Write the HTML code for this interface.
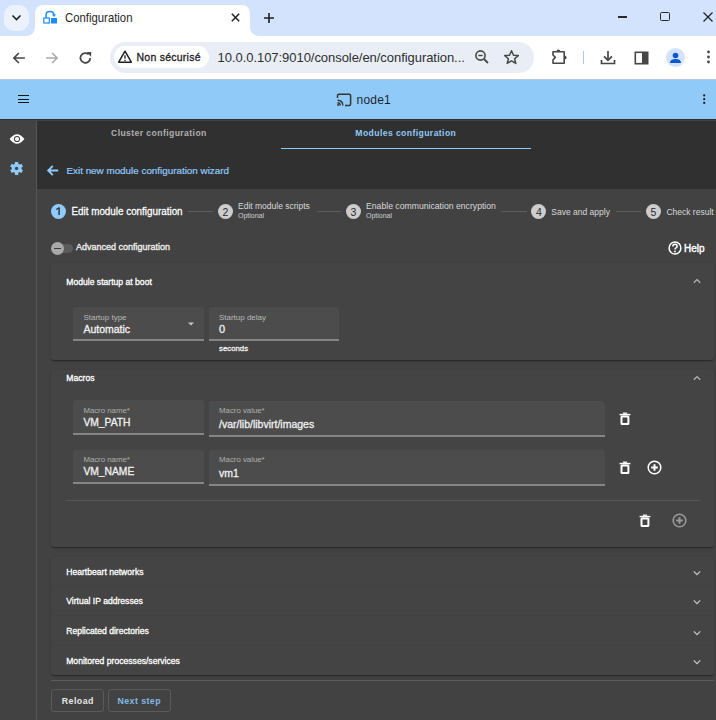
<!DOCTYPE html>
<html><head><meta charset="utf-8"><style>
html,body{margin:0;padding:0;}
body{width:716px;height:720px;position:relative;overflow:hidden;background:#424242;font-family:"Liberation Sans",sans-serif;}
.t{position:absolute;white-space:nowrap;}
.r{position:absolute;display:block;}
</style></head><body>
<div class="r" style="left:0px;top:0px;width:716px;height:36px;background:#d3e3fd;"></div>
<div class="r" style="left:4px;top:5px;width:25px;height:25.5px;background:#ecf2fc;border-radius:10px;"></div>
<svg class="r" style="left:4px;top:5px;" width="25" height="25" viewBox="0 0 25 25"><path d="M8.5 10.5 L12.5 14.5 L16.5 10.5" fill="none" stroke="#1f1f1f" stroke-width="1.6"/></svg>
<svg class="r" style="left:25px;top:5px;" width="235" height="31" viewBox="0 0 235 31"><path d="M0 31 Q10 31 10 21 L10 9 Q10 0 19 0 L216 0 Q225 0 225 9 L225 21 Q225 31 235 31 Z" fill="#fff"/></svg>
<svg class="r" style="left:0px;top:36px;" width="5" height="3" viewBox="0 0 5 3"><path d="M0 0 H4 Q0 0 0 3 Z" fill="#d3e3fd"/></svg>
<svg class="r" style="left:43px;top:10px;" width="15" height="14" viewBox="0 0 15 14"><path d="M3 8 L3 5 Q3 1.5 7 1.5 Q10.5 1.5 11 5" fill="none" stroke="#1a8cff" stroke-width="1.5"/><path d="M9 4.5 L11 7 L13 4.5Z" fill="#1a8cff"/><rect x="0.8" y="8" width="5.5" height="5" fill="none" stroke="#1a8cff" stroke-width="1.2"/><rect x="8" y="8" width="6" height="5.5" fill="#1a8cff"/></svg>
<div class="t" style="left:65px;top:12.89px;font-size:11.35px;line-height:11.35px;color:#262626;font-weight:normal;transform:scaleY(1.08);transform-origin:0 9.61px;">Configuration</div>
<svg class="r" style="left:230px;top:12px;" width="11" height="11" viewBox="0 0 11 11"><path d="M1.8 1.8 L9.2 9.2 M9.2 1.8 L1.8 9.2" stroke="#1f1f1f" stroke-width="1.5"/></svg>
<svg class="r" style="left:263px;top:12px;" width="12" height="12" viewBox="0 0 12 12"><path d="M6 1 V11 M1 6 H11" stroke="#1f1f1f" stroke-width="1.6"/></svg>
<div class="r" style="left:617.8px;top:16.2px;width:9.6px;height:1.5px;background:#2a2a2a;"></div>
<div class="r" style="left:659.8px;top:11.8px;width:10.2px;height:9.4px;background:transparent;border:1.5px solid #2a2a2a;border-radius:1.5px;box-sizing:border-box;"></div>
<svg class="r" style="left:702px;top:11px;" width="12" height="12" viewBox="0 0 12 12"><path d="M1.5 1.5 L10.5 10.5 M10.5 1.5 L1.5 10.5" stroke="#1f1f1f" stroke-width="1.2"/></svg>
<div class="r" style="left:0px;top:36px;width:716px;height:43px;background:#ffffff;"></div>
<div class="r" style="left:0px;top:79px;width:716px;height:1px;background:#b9c7d6;"></div>
<svg class="r" style="left:11px;top:49.7px;" width="16" height="16" viewBox="0 0 16 16"><path d="M13.9 8 H3 M7.9 3 L2.9 8 L7.9 13" fill="none" stroke="#474747" stroke-width="1.7"/></svg>
<svg class="r" style="left:44px;top:49.7px;" width="16" height="16" viewBox="0 0 16 16"><path d="M2.1 8 H13 M8.1 3 L13.1 8 L8.1 13" fill="none" stroke="#ababab" stroke-width="1.6"/></svg>
<svg class="r" style="left:77px;top:49.6px;" width="16" height="16" viewBox="0 0 16 16"><path d="M13.2 7.9 A4.9 4.9 0 1 1 11.6 4.3" fill="none" stroke="#474747" stroke-width="1.75"/><path d="M9.4 2 L14.1 2 L14.1 6.7 Z" fill="#474747"/></svg>
<div class="r" style="left:110px;top:42px;width:424px;height:31px;background:#e9eef6;border-radius:16px;"></div>
<div class="r" style="left:114px;top:46px;width:95px;height:22px;background:#ffffff;border-radius:11px;"></div>
<svg class="r" style="left:117px;top:49px;" width="16" height="16" viewBox="0 0 16 16"><path d="M8 2.2 L14.3 13.2 H1.7 Z" fill="none" stroke="#1f1f1f" stroke-width="1.5" stroke-linejoin="round"/><path d="M8 6.3 V9.8" stroke="#1f1f1f" stroke-width="1.3"/><circle cx="8" cy="11.5" r="0.8" fill="#1f1f1f"/></svg>
<div class="t" style="left:136.5px;top:52.01px;font-size:10.5px;line-height:10.5px;color:#1f1f1f;font-weight:normal;-webkit-text-stroke:0.3px #1f1f1f;letter-spacing:0.25px;transform:scaleY(1.12);transform-origin:0 8.89px;">Non sécurisé</div>
<div class="t" style="left:217.6px;top:51.29px;font-size:13px;line-height:13px;color:#2e2e2e;font-weight:normal;letter-spacing:-0.05px;">10.0.0.107:9010/console/en/configuration...</div>
<svg class="r" style="left:474px;top:49px;" width="16" height="16" viewBox="0 0 16 16"><circle cx="6.5" cy="6.5" r="4.6" fill="none" stroke="#474747" stroke-width="1.6"/><path d="M4.3 6.5 H8.7" stroke="#474747" stroke-width="1.4"/><path d="M10 10 L14 14" stroke="#474747" stroke-width="1.8"/></svg>
<svg class="r" style="left:503px;top:49px;" width="17" height="16" viewBox="0 0 17 16"><path d="M8.5 1.8 L10.5 6.3 L15.3 6.6 L11.6 9.7 L12.8 14.4 L8.5 11.8 L4.2 14.4 L5.4 9.7 L1.7 6.6 L6.5 6.3 Z" fill="none" stroke="#474747" stroke-width="1.5" stroke-linejoin="round"/></svg>
<svg class="r" style="left:545px;top:45px;" width="30" height="25" viewBox="0 0 30 25"><path d="M8 6.8 H19.2 V18.2 H8 V14.8 L10.4 12.4 L8 10 Z" fill="none" stroke="#474747" stroke-width="1.6" stroke-linejoin="round"/><path d="M11.4 6.8 Q11.4 4.6 13.4 4.6 Q15.4 4.6 15.4 6.8 Z" fill="#474747"/><path d="M19.2 10.4 Q21.6 10.4 21.6 12.4 Q21.6 14.4 19.2 14.4 Z" fill="#474747"/></svg>
<div class="r" style="left:583px;top:51px;width:1px;height:13px;background:#a8c7fa;"></div>
<svg class="r" style="left:599px;top:49px;" width="18" height="17" viewBox="0 0 18 17"><path d="M9 2 V11 M5 7.3 L9 11.3 L13 7.3" fill="none" stroke="#474747" stroke-width="1.7"/><path d="M2.5 11 V14.5 H15.5 V11" fill="none" stroke="#474747" stroke-width="1.7"/></svg>
<svg class="r" style="left:633px;top:50px;" width="17" height="16" viewBox="0 0 17 16"><rect x="2.3" y="2.3" width="12.4" height="11.4" fill="none" stroke="#474747" stroke-width="1.6"/><rect x="9" y="2.3" width="5.7" height="11.4" fill="#474747"/></svg>
<div class="r" style="left:665.7px;top:48px;width:19px;height:19px;background:#d3e3fd;border-radius:50%;"></div>
<svg class="r" style="left:665.7px;top:48px;" width="19" height="19" viewBox="0 0 19 19"><circle cx="9.5" cy="7.5" r="2.8" fill="#0b57d0"/><path d="M4 15 Q4 11 9.5 11 Q15 11 15 15 Z" fill="#0b57d0"/></svg>
<svg class="r" style="left:704px;top:49px;" width="9" height="16" viewBox="0 0 9 16"><circle cx="4.5" cy="3" r="1.4" fill="#474747"/><circle cx="4.5" cy="8" r="1.4" fill="#474747"/><circle cx="4.5" cy="13" r="1.4" fill="#474747"/></svg>
<div class="r" style="left:0px;top:80px;width:716px;height:39px;background:#90caf9;"></div>
<div class="r" style="left:0px;top:119px;width:716px;height:1.3px;background:rgba(0,0,0,0.28);"></div>
<div class="r" style="left:17.5px;top:95.1px;width:11.2px;height:1.25px;background:#151515;"></div>
<div class="r" style="left:17.5px;top:98.5px;width:11.2px;height:1.25px;background:#151515;"></div>
<div class="r" style="left:17.5px;top:101.9px;width:11.2px;height:1.25px;background:#151515;"></div>
<svg class="r" style="left:336px;top:93px;" width="16" height="14" viewBox="0 0 16 14"><path d="M1.5 5 V2.5 Q1.5 1.2 3 1.2 H13.2 Q14.6 1.2 14.6 2.5 V11.2 Q14.6 12.5 13.2 12.5 H9" fill="none" stroke="#333" stroke-width="1.5"/><path d="M1.5 7.2 Q6.8 7.2 6.8 12.5 M1.5 9.8 Q4.2 9.8 4.2 12.5" fill="none" stroke="#333" stroke-width="1.4"/><circle cx="2.1" cy="11.9" r="1" fill="#333"/></svg>
<div class="t" style="left:356.6px;top:94.04px;font-size:12px;line-height:12px;color:rgba(0,0,0,0.85);font-weight:normal;letter-spacing:0.2px;">node1</div>
<svg class="r" style="left:700px;top:92px;" width="8" height="14" viewBox="0 0 8 14"><circle cx="4.2" cy="3.4" r="1.1" fill="#1a1a1a"/><circle cx="4.2" cy="7.2" r="1.1" fill="#1a1a1a"/><circle cx="4.2" cy="10.9" r="1.1" fill="#1a1a1a"/></svg>
<div class="r" style="left:0px;top:120.5px;width:36px;height:600px;background:#424242;"></div>
<div class="r" style="left:36px;top:120.5px;width:1px;height:600px;background:#575757;"></div>
<svg class="r" style="left:9px;top:132px;" width="16" height="14" viewBox="0 0 16 14"><path d="M0.6 7 Q8 -2.6 15.4 7 Q8 16.6 0.6 7 Z" fill="#fff"/><circle cx="8" cy="7" r="3.1" fill="#424242"/><circle cx="8" cy="7" r="2.1" fill="#fff"/></svg>
<svg class="r" style="left:9px;top:161px;" width="15" height="15" viewBox="0 0 15 15"><g transform="translate(7.6 7.4)" fill="#90caf9"><circle r="4.9"/><rect x="-1.7" y="-6.5" width="3.4" height="3.4" rx="0.5" transform="rotate(0)"/><rect x="-1.7" y="-6.5" width="3.4" height="3.4" rx="0.5" transform="rotate(60)"/><rect x="-1.7" y="-6.5" width="3.4" height="3.4" rx="0.5" transform="rotate(120)"/><rect x="-1.7" y="-6.5" width="3.4" height="3.4" rx="0.5" transform="rotate(180)"/><rect x="-1.7" y="-6.5" width="3.4" height="3.4" rx="0.5" transform="rotate(240)"/><rect x="-1.7" y="-6.5" width="3.4" height="3.4" rx="0.5" transform="rotate(300)"/><circle r="1.7" fill="#424242"/></g></svg>
<div class="r" style="left:37px;top:120.5px;width:679px;height:68.5px;background:#303030;"></div>
<div class="t" style="left:111px;top:129.02px;font-size:8.6px;line-height:8.6px;color:#b0b0b0;font-weight:bold;letter-spacing:0.42px;">Cluster configuration</div>
<div class="t" style="left:355.3px;top:129.02px;font-size:8.6px;line-height:8.6px;color:#90caf9;font-weight:bold;letter-spacing:0.42px;">Modules configuration</div>
<div class="r" style="left:281px;top:148px;width:250px;height:1.2px;background:#90caf9;"></div>
<svg class="r" style="left:46px;top:164px;" width="13" height="13" viewBox="0 0 13 13"><path d="M12.2 6.5 H2 M6.8 1.9 L2.2 6.5 L6.8 11.1" fill="none" stroke="#90caf9" stroke-width="1.85"/></svg>
<div class="t" style="left:66.5px;top:165.96px;font-size:9.85px;line-height:9.85px;color:#90caf9;font-weight:normal;-webkit-text-stroke:0.2px #90caf9;">Exit new module configuration wizard</div>
<div class="r" style="left:37px;top:189px;width:679px;height:531px;background:#424242;"></div>
<div class="r" style="left:50.9px;top:203.6px;width:15.2px;height:15.2px;background:#90caf9;border-radius:50%;"></div>
<svg class="r" style="left:54px;top:206px;" width="8" height="10" viewBox="0 0 8 10"><path d="M5.1 1.5 V8.9" stroke="#1e2a33" stroke-width="1.35"/><path d="M5.1 1.6 Q4 3 2.2 3.4" fill="none" stroke="#1e2a33" stroke-width="1.1"/></svg>
<div class="t" style="left:71.5px;top:206.76px;font-size:9.85px;line-height:9.85px;color:#ffffff;font-weight:normal;-webkit-text-stroke:0.25px #ffffff;transform:scaleY(1.1);transform-origin:0 8.34px;">Edit module configuration</div>
<div class="r" style="left:187.5px;top:211px;width:25px;height:1px;background:#5f5f5f;"></div>
<div class="r" style="left:217.8px;top:203.6px;width:15.2px;height:15.2px;background:#cdcdcd;border-radius:50%;"></div>
<div class="t" style="left:215.4px;top:206.71px;font-size:10.5px;line-height:10.5px;color:#2a2a2a;font-weight:normal;width:20px;text-align:center;">2</div>
<div class="t" style="left:238px;top:202.40px;font-size:8.5px;line-height:8.5px;color:#d8d8d8;font-weight:normal;">Edit module scripts</div>
<div class="t" style="left:238px;top:212.27px;font-size:7px;line-height:7px;color:#cfcfcf;font-weight:normal;">Optional</div>
<div class="r" style="left:316.7px;top:211px;width:24px;height:1px;background:#5f5f5f;"></div>
<div class="r" style="left:345.9px;top:203.6px;width:15.2px;height:15.2px;background:#cdcdcd;border-radius:50%;"></div>
<div class="t" style="left:343.5px;top:206.71px;font-size:10.5px;line-height:10.5px;color:#2a2a2a;font-weight:normal;width:20px;text-align:center;">3</div>
<div class="t" style="left:366px;top:202.26px;font-size:8.67px;line-height:8.67px;color:#d8d8d8;font-weight:normal;">Enable communication encryption</div>
<div class="t" style="left:366px;top:212.27px;font-size:7px;line-height:7px;color:#cfcfcf;font-weight:normal;">Optional</div>
<div class="r" style="left:501px;top:211px;width:26px;height:1px;background:#5f5f5f;"></div>
<div class="r" style="left:531.1999999999999px;top:203.6px;width:15.2px;height:15.2px;background:#cdcdcd;border-radius:50%;"></div>
<div class="t" style="left:528.8px;top:206.71px;font-size:10.5px;line-height:10.5px;color:#2a2a2a;font-weight:normal;width:20px;text-align:center;">4</div>
<div class="t" style="left:551.3px;top:207.50px;font-size:8.5px;line-height:8.5px;color:#d8d8d8;font-weight:normal;transform:scaleY(1.15);transform-origin:0 7.20px;">Save and apply</div>
<div class="r" style="left:615.7px;top:211px;width:25px;height:1px;background:#5f5f5f;"></div>
<div class="r" style="left:645.8px;top:203.6px;width:15.2px;height:15.2px;background:#cdcdcd;border-radius:50%;"></div>
<div class="t" style="left:643.4px;top:206.71px;font-size:10.5px;line-height:10.5px;color:#2a2a2a;font-weight:normal;width:20px;text-align:center;">5</div>
<div class="t" style="left:666.4px;top:207.50px;font-size:8.5px;line-height:8.5px;color:#d8d8d8;font-weight:normal;transform:scaleY(1.15);transform-origin:0 7.20px;">Check result</div>
<div class="r" style="left:52px;top:243.9px;width:21px;height:9px;background:#5b5b5b;border-radius:5px;"></div>
<div class="r" style="left:51px;top:241.7px;width:13px;height:13px;background:#a9a9a9;border-radius:50%;"></div>
<div class="r" style="left:54.2px;top:247.7px;width:6.6px;height:1.3px;background:#3a3a3a;"></div>
<div class="t" style="left:76px;top:242.98px;font-size:9px;line-height:9px;color:#f2f2f2;font-weight:normal;-webkit-text-stroke:0.3px #f2f2f2;">Advanced configuration</div>
<svg class="r" style="left:668px;top:241px;" width="14" height="14" viewBox="0 0 14 14"><circle cx="7" cy="7" r="5.9" fill="none" stroke="#fff" stroke-width="1.5"/><path d="M4.9 5.6 Q4.9 3.3 7 3.3 Q9.1 3.3 9.1 5.2 Q9.1 6.4 7.7 7.1 Q7 7.6 7 8.6" fill="none" stroke="#fff" stroke-width="1.6"/><circle cx="7" cy="10.5" r="0.95" fill="#fff"/></svg>
<div class="t" style="left:684px;top:243.53px;font-size:10px;line-height:10px;color:#ffffff;font-weight:normal;-webkit-text-stroke:0.4px #ffffff;">Help</div>
<div class="r" style="left:51px;top:262.5px;width:663px;height:97.5px;background:#444444;border-radius:3px;box-shadow:0 2px 1px -1px rgba(0,0,0,0.2),0 1px 1px 0 rgba(0,0,0,0.14),0 1px 3px 0 rgba(0,0,0,0.12);"></div>
<div class="t" style="left:66.3px;top:278.22px;font-size:8.6px;line-height:8.6px;color:#ffffff;font-weight:normal;-webkit-text-stroke:0.3px #ffffff;">Module startup at boot</div>
<svg class="r" style="left:692px;top:277.2px;" width="10" height="8" viewBox="0 0 10 8"><path d="M1.8 5.8 L5 2.6 L8.2 5.8" fill="none" stroke="#b5b5b5" stroke-width="1.3"/></svg>
<div class="r" style="left:73px;top:307px;width:131px;height:32px;background:#4c4c4c;border-radius:3px 3px 0 0;"></div>
<div class="r" style="left:73px;top:339px;width:131px;height:2px;background:#858585;"></div>
<div class="r" style="left:208.6px;top:307px;width:130.7px;height:32px;background:#4c4c4c;border-radius:3px 3px 0 0;"></div>
<div class="r" style="left:208.6px;top:339px;width:130.7px;height:2px;background:#858585;"></div>
<div class="t" style="left:83.4px;top:313.53px;font-size:8px;line-height:8px;color:#b8b8b8;font-weight:normal;">Startup type</div>
<div class="t" style="left:83.4px;top:324.11px;font-size:10.5px;line-height:10.5px;color:#f0f0f0;font-weight:normal;-webkit-text-stroke:0.3px #f0f0f0;transform:scaleY(1.1);transform-origin:0 8.89px;">Automatic</div>
<svg class="r" style="left:187px;top:321px;" width="8" height="6" viewBox="0 0 8 6"><path d="M1 1.5 H7 L4 4.6 Z" fill="#c8c8c8"/></svg>
<div class="t" style="left:218.9px;top:313.53px;font-size:8px;line-height:8px;color:#b8b8b8;font-weight:normal;">Startup delay</div>
<div class="t" style="left:218.9px;top:323.69px;font-size:11px;line-height:11px;color:#f0f0f0;font-weight:normal;-webkit-text-stroke:0.3px #f0f0f0;transform:scaleY(1.06);transform-origin:0 9.31px;">0</div>
<div class="t" style="left:219px;top:344.70px;font-size:7.8px;line-height:7.8px;color:#eeeeee;font-weight:normal;-webkit-text-stroke:0.3px #eeeeee;">seconds</div>
<div class="r" style="left:51px;top:369.6px;width:663px;height:177.1px;background:#444444;border-radius:3px;box-shadow:0 2px 1px -1px rgba(0,0,0,0.2),0 1px 1px 0 rgba(0,0,0,0.14),0 1px 3px 0 rgba(0,0,0,0.12);"></div>
<div class="t" style="left:66.3px;top:374.42px;font-size:8.6px;line-height:8.6px;color:#ffffff;font-weight:normal;-webkit-text-stroke:0.3px #ffffff;">Macros</div>
<svg class="r" style="left:692px;top:373.5px;" width="10" height="8" viewBox="0 0 10 8"><path d="M1.8 5.8 L5 2.6 L8.2 5.8" fill="none" stroke="#b5b5b5" stroke-width="1.3"/></svg>
<div class="r" style="left:73px;top:400.3px;width:131px;height:32.69999999999999px;background:#4c4c4c;border-radius:3px 3px 0 0;"></div>
<div class="r" style="left:73px;top:433px;width:131px;height:2px;background:#858585;"></div>
<div class="r" style="left:208.6px;top:400.6px;width:396px;height:34.39999999999998px;background:#4c4c4c;border-radius:3px 3px 0 0;"></div>
<div class="r" style="left:208.6px;top:435px;width:396px;height:2px;background:#858585;"></div>
<div class="t" style="left:83.4px;top:406.80px;font-size:7.8px;line-height:7.8px;color:#b0b0b0;font-weight:normal;">Macro name*</div>
<div class="t" style="left:83.4px;top:417.88px;font-size:10.3px;line-height:10.3px;color:#f0f0f0;font-weight:normal;-webkit-text-stroke:0.3px #f0f0f0;transform:scaleY(1.04);transform-origin:0 8.72px;">VM_PATH</div>
<div class="t" style="left:219.1px;top:406.80px;font-size:7.8px;line-height:7.8px;color:#b0b0b0;font-weight:normal;">Macro value*</div>
<div class="t" style="left:219.1px;top:418.71px;font-size:10.5px;line-height:10.5px;color:#f0f0f0;font-weight:normal;-webkit-text-stroke:0.3px #f0f0f0;transform:scaleY(1.03);transform-origin:0 8.89px;">/var/lib/libvirt/images</div>
<div class="r" style="left:73px;top:449.5px;width:131px;height:32.5px;background:#4c4c4c;border-radius:3px 3px 0 0;"></div>
<div class="r" style="left:73px;top:482px;width:131px;height:2px;background:#858585;"></div>
<div class="r" style="left:208.6px;top:449.6px;width:396px;height:34.39999999999998px;background:#4c4c4c;border-radius:3px 3px 0 0;"></div>
<div class="r" style="left:208.6px;top:484px;width:396px;height:2px;background:#858585;"></div>
<div class="t" style="left:83.4px;top:455.90px;font-size:7.8px;line-height:7.8px;color:#b0b0b0;font-weight:normal;">Macro name*</div>
<div class="t" style="left:83.4px;top:467.08px;font-size:10.3px;line-height:10.3px;color:#f0f0f0;font-weight:normal;-webkit-text-stroke:0.3px #f0f0f0;transform:scaleY(1.04);transform-origin:0 8.72px;">VM_NAME</div>
<div class="t" style="left:219.1px;top:455.90px;font-size:7.8px;line-height:7.8px;color:#b0b0b0;font-weight:normal;">Macro value*</div>
<div class="t" style="left:219.1px;top:467.91px;font-size:10.5px;line-height:10.5px;color:#f0f0f0;font-weight:normal;-webkit-text-stroke:0.3px #f0f0f0;transform:scaleY(1.03);transform-origin:0 8.89px;">vm1</div>
<svg class="r" style="left:618.6px;top:411.7px;" width="12" height="14" viewBox="0 0 12 14"><path d="M3.9 1.2 H8.1" stroke="#fff" stroke-width="1.3"/><path d="M0.6 2.6 H11.4" stroke="#fff" stroke-width="1.5"/><rect x="2.5" y="4.6" width="6.9" height="7.3" rx="0.5" fill="none" stroke="#fff" stroke-width="2"/></svg>
<svg class="r" style="left:618.6px;top:461.3px;" width="12" height="14" viewBox="0 0 12 14"><path d="M3.9 1.2 H8.1" stroke="#fff" stroke-width="1.3"/><path d="M0.6 2.6 H11.4" stroke="#fff" stroke-width="1.5"/><rect x="2.5" y="4.6" width="6.9" height="7.3" rx="0.5" fill="none" stroke="#fff" stroke-width="2"/></svg>
<svg class="r" style="left:646.8px;top:460.3px;" width="15" height="15" viewBox="0 0 15 15"><circle cx="7.5" cy="7.5" r="6.3" fill="none" stroke="#fff" stroke-width="1.5"/><path d="M7.5 4.2 V10.8 M4.2 7.5 H10.8" stroke="#fff" stroke-width="2"/></svg>
<div class="r" style="left:65.8px;top:499.5px;width:634px;height:1px;background:#555555;"></div>
<svg class="r" style="left:639px;top:513.8px;" width="12" height="14" viewBox="0 0 12 14"><path d="M3.9 1.2 H8.1" stroke="#fff" stroke-width="1.3"/><path d="M0.6 2.6 H11.4" stroke="#fff" stroke-width="1.5"/><rect x="2.5" y="4.6" width="6.9" height="7.3" rx="0.5" fill="none" stroke="#fff" stroke-width="2"/></svg>
<svg class="r" style="left:672.0px;top:513.1px;" width="15" height="15" viewBox="0 0 15 15"><circle cx="7.5" cy="7.5" r="6.3" fill="none" stroke="#999999" stroke-width="1.6"/><path d="M7.5 4.2 V10.8 M4.2 7.5 H10.8" stroke="#999999" stroke-width="2"/></svg>
<div class="r" style="left:51px;top:556.5px;width:663px;height:118.1px;background:#444444;border-radius:3px;box-shadow:0 2px 1px -1px rgba(0,0,0,0.2),0 1px 1px 0 rgba(0,0,0,0.14),0 1px 3px 0 rgba(0,0,0,0.12);"></div>
<div class="t" style="left:66.2px;top:567.72px;font-size:8.6px;line-height:8.6px;color:#ffffff;font-weight:normal;-webkit-text-stroke:0.3px #ffffff;">Heartbeart networks</div>
<svg class="r" style="left:692px;top:569.1px;" width="10" height="8" viewBox="0 0 10 8"><path d="M1.8 2.4 L5 5.6 L8.2 2.4" fill="none" stroke="#c5c5c5" stroke-width="1.3"/></svg>
<div class="t" style="left:66.2px;top:597.22px;font-size:8.6px;line-height:8.6px;color:#ffffff;font-weight:normal;-webkit-text-stroke:0.3px #ffffff;">Virtual IP addresses</div>
<svg class="r" style="left:692px;top:598.4px;" width="10" height="8" viewBox="0 0 10 8"><path d="M1.8 2.4 L5 5.6 L8.2 2.4" fill="none" stroke="#c5c5c5" stroke-width="1.3"/></svg>
<div class="t" style="left:66.2px;top:626.72px;font-size:8.6px;line-height:8.6px;color:#ffffff;font-weight:normal;-webkit-text-stroke:0.3px #ffffff;">Replicated directories</div>
<svg class="r" style="left:692px;top:628.6px;" width="10" height="8" viewBox="0 0 10 8"><path d="M1.8 2.4 L5 5.6 L8.2 2.4" fill="none" stroke="#c5c5c5" stroke-width="1.3"/></svg>
<div class="t" style="left:66.2px;top:656.72px;font-size:8.6px;line-height:8.6px;color:#ffffff;font-weight:normal;-webkit-text-stroke:0.3px #ffffff;">Monitored processes/services</div>
<svg class="r" style="left:692px;top:658.1px;" width="10" height="8" viewBox="0 0 10 8"><path d="M1.8 2.4 L5 5.6 L8.2 2.4" fill="none" stroke="#c5c5c5" stroke-width="1.3"/></svg>
<div class="r" style="left:51px;top:585px;width:663px;height:1px;background:rgba(0,0,0,0.035);"></div>
<div class="r" style="left:51px;top:614.6px;width:663px;height:1px;background:rgba(0,0,0,0.035);"></div>
<div class="r" style="left:51px;top:645px;width:663px;height:1px;background:rgba(0,0,0,0.035);"></div>
<div class="r" style="left:51px;top:679.5px;width:663px;height:1px;background:#5c5c5c;"></div>
<div class="r" style="left:51px;top:689px;width:52.7px;height:22.7px;background:transparent;border:1px solid #5a5a5a;border-radius:3px;box-sizing:border-box;"></div>
<div class="r" style="left:107.7px;top:689px;width:63.7px;height:22.7px;background:transparent;border:1px solid #5a5a5a;border-radius:3px;box-sizing:border-box;"></div>
<div class="t" style="left:61.7px;top:696.55px;font-size:8.8px;line-height:8.8px;color:#e6e6e6;font-weight:bold;letter-spacing:0.48px;transform:scaleY(1.08);transform-origin:0 7.45px;">Reload</div>
<div class="t" style="left:117.4px;top:696.55px;font-size:8.8px;line-height:8.8px;color:#84b9e3;font-weight:bold;letter-spacing:0.45px;transform:scaleY(1.08);transform-origin:0 7.45px;">Next step</div>
</body></html>
